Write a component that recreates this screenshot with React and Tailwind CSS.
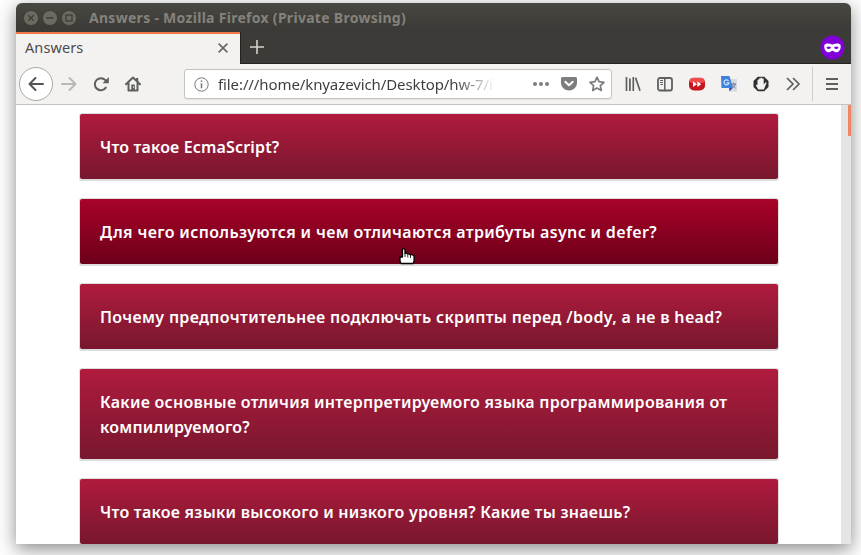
import React from "react";

const questions = [
  { lines: [["Что такое EcmaScript?", "tracking-[0.16px]"]], height: "h-[65px]" },
  { lines: [["Для чего используются и чем отличаются атрибуты async и defer?", "tracking-[0.35px]"]], height: "h-[65px]", active: true },
  { lines: [["Почему предпочтительнее подключать скрипты перед /body, а не в head?", "tracking-[0.33px]"]], height: "h-[65px]" },
  {
    lines: [
      ["Какие основные отличия интерпретируемого языка программирования от", "tracking-[0.26px]"],
      ["компилируемого?", "tracking-[0.22px]"],
    ],
    height: "h-[90px]",
  },
  { lines: [["Что такое языки высокого и низкого уровня? Какие ты знаешь?", "tracking-[0.25px]"]], height: "h-[65px]" },
];

function WindowButton({ children }) {
  return (
    <svg width="16" height="16" viewBox="0 0 16 16" fill="none" stroke="#3c3b37" strokeWidth="1.3">
      <circle cx="8" cy="8" r="7.5" fill="#6b6a60" stroke="#33322e" strokeWidth="0.6" />
      {children}
    </svg>
  );
}

function TitleBar() {
  return (
    <div className="flex h-[29px] items-center gap-[3px] pl-[7px]">
      <WindowButton><path d="M5.3 5.3l5.4 5.4M10.7 5.3l-5.4 5.4" /></WindowButton>
      <WindowButton><path d="M4.5 8h7" /></WindowButton>
      <WindowButton><rect x="5" y="5" width="6" height="6" /></WindowButton>
      <div className="ml-[9px] whitespace-nowrap text-[14px] leading-none font-bold tracking-[0.29px] text-[#85827c]">
        Answers - Mozilla Firefox (Private Browsing)
      </div>
    </div>
  );
}

function TabBar() {
  return (
    <div className="flex h-8 items-stretch">
      <div className="flex w-[224px] items-center justify-between border-t-2 border-[#f07746] bg-[#f3f2f0] pr-3 pl-[9px] text-[14.5px] text-[#4c4c4c]">
        <span className="pb-[3px] leading-none tracking-[0.1px]">Answers</span>
        <svg className="mb-0.5" width="10" height="10" viewBox="0 0 10 10" stroke="#666" strokeWidth="1.6">
          <path d="M.6.6l8.8 8.8M9.4.6L.6 9.4" />
        </svg>
      </div>
      <div className="flex flex-1 items-center border-b border-l border-[#242320] pr-[6px] pl-[9px]">
        <svg className="mb-px" width="14" height="14" viewBox="0 0 14 14" stroke="#d6d3cb" strokeWidth="1.6">
          <path d="M7 0v14M0 7h14" />
        </svg>
        <svg className="ml-auto" width="25" height="25" viewBox="0 0 25 25">
          <circle cx="12.5" cy="12.5" r="12" fill="#8000d7" />
          <path fill="#fff" fillRule="evenodd" d="M4.400 10C5 8.200 9 7.900 12.500 9.500c3.500-1.600 7.500-1.300 8.100.5.700 4.200-1.500 7.300-4.300 7.300-2 0-2.600-1.500-3.800-1.500s-1.800 1.500-3.800 1.500c-2.800 0-5-3.100-4.300-7.300zM6.300 12.800c1.500 1.700 3.300 1.700 4.800 0-1.500-1.700-3.300-1.700-4.800 0zm7.600 0c1.500 1.700 3.300 1.700 4.800 0-1.500-1.700-3.300-1.700-4.800 0z" />
        </svg>
      </div>
    </div>
  );
}

function AddressBar() {
  return (
    <div className="ml-[43px] flex h-[30px] w-[428px] shrink-0 items-center rounded-[3px] border border-[#c5c3c0] bg-white pl-[9px] shadow-[0_1px_1px_#e4e3e1]">
      <svg width="15" height="15" viewBox="0 0 15 15" fill="none" stroke="#777">
        <circle cx="7.500" cy="7.500" r="6.700" />
        <path d="M7.500 6.300v4.900M7.500 3.600v1.500" strokeWidth="1.500" />
      </svg>
      <div className="ml-[9px] w-[278px] overflow-hidden bg-linear-to-r from-[#3c3c3c] from-85% to-transparent bg-clip-text text-[15px] leading-6 tracking-[-0.1px] whitespace-nowrap text-transparent">
        file:///home/knyazevich/Desktop/hw-7/i
      </div>
      <svg className="ml-[36px]" width="18" height="6" viewBox="0 0 18 6" fill="#7d7d7d">
        <circle cx="3" cy="3" r="2" /><circle cx="9" cy="3" r="2" /><circle cx="15" cy="3" r="2" />
      </svg>
      <svg className="ml-[11px]" width="16" height="16" viewBox="0 0 16 16">
        <path fill="#7d7d7d" d="M1.500 1h13A1.500 1.500 0 0 1 16 2.500V7A8 7.500 0 0 1 0 7V2.500A1.500 1.500 0 0 1 1.500 1z" />
        <path d="M4.300 5.800L8 9.300l3.700-3.500" fill="none" stroke="#fff" strokeWidth="2" strokeLinecap="round" strokeLinejoin="round" />
      </svg>
      <svg className="ml-[12px]" width="16" height="16" viewBox="0 0 16 16" fill="none" stroke="#7d7d7d" strokeWidth="1.700" strokeLinejoin="round">
        <path d="M8 1.200l2.050 4.500 4.950.6-3.650 3.350.95 4.850L8 12.100l-4.300 2.400.95-4.850L1 6.300l4.950-.6z" />
      </svg>
    </div>
  );
}

function Toolbar() {
  return (
    <div className="flex h-[41px] items-center border-b border-[#c5c3c0] bg-[#f3f2f0] pl-[3px]">
      <div className="flex size-[34px] items-center justify-center rounded-full border border-[#aaa8a5] bg-white">
        <svg width="16" height="16" viewBox="0 0 16 16" fill="none" stroke="#555" strokeWidth="2" strokeLinecap="round" strokeLinejoin="round">
          <path d="M15 8H1.500M7.500 2L1.500 8l6 6" />
        </svg>
      </div>
      <svg className="ml-2" width="16" height="16" viewBox="0 0 16 16" fill="none" stroke="#b9b8b6" strokeWidth="2" strokeLinecap="round" strokeLinejoin="round">
        <path d="M1 8h13.500M8.500 2l6 6-6 6" />
      </svg>
      <svg className="ml-4" width="16" height="16" viewBox="0 0 16 16" fill="none" stroke="#5f5f5f" strokeWidth="2">
        <path d="M12.800 11.600A6 6 0 1 1 12.300 4.200" strokeLinecap="round" />
        <path d="M15.800 1v6.300H9.500z" fill="#5f5f5f" stroke="none" />
      </svg>
      <svg className="ml-4" width="16" height="16" viewBox="0 0 16 16">
        <path d="M1 8.300L8 1.500l7 6.800M3.500 7v7.500h9V7" fill="none" stroke="#5f5f5f" strokeWidth="2" strokeLinecap="round" strokeLinejoin="round" />
        <path d="M6.300 8.500h3.500v6H6.300zM11 2h2.200v4L11 4z" fill="#5f5f5f" />
        <path d="M8 10.500h1v1.200H8z" fill="#f3f2f0" />
      </svg>
      <AddressBar />
      <svg className="ml-[13px]" width="16" height="16" viewBox="0 0 16 16" stroke="#5f5f5f" strokeWidth="1.700">
        <path d="M1.500 1v14M4.900 2.500V15M8.300 1v14M10.600 1.700L15 14.700" />
      </svg>
      <svg className="ml-4" width="16" height="16" viewBox="0 0 16 16" fill="none" stroke="#5f5f5f">
        <rect x="1" y="2" width="14" height="12.500" rx="2" strokeWidth="1.800" />
        <path d="M7.800 2v12.500" strokeWidth="1.500" />
        <path d="M3 4.500h3M3 6.500h3M3.500 8.500H6" />
      </svg>
      <svg className="ml-4" width="16" height="16" viewBox="0 0 16 16">
        <rect y="1.800" width="16" height="12.700" rx="5" fill="#c4161c" />
        <rect x=".7" y="2" width="14.600" height="5" rx="2.500" fill="#ee4b4b" />
        <path d="M4 5.500l4 2.700-4 2.700zM8.300 5.500l4 2.700-4 2.700z" fill="#fff" />
      </svg>
      <svg className="ml-4" width="16" height="16" viewBox="0 0 16 16">
        <path d="M6 3h10v12.500H9z" fill="#d6d9df" />
        <path d="M0 0h8.500l3.500 12H.5z" fill="#3d82dc" />
        <path d="M8 12h3.500L8.500 15.500z" fill="#3949ab" />
        <path d="M7.500 4.800a2.500 2.500 0 1 0 .5 2H5.500" fill="none" stroke="#cfe3fb" strokeWidth="1.200" />
        <path d="M10.500 8h4.500M12.700 6.800V8M14.300 8c-.5 2-1.800 3-3 3.800M11.500 9c.8 1.500 2 2.300 3 3" fill="none" stroke="#657b94" />
      </svg>
      <svg className="ml-4" width="16" height="16" viewBox="0 0 16 16">
        <path d="M4.800.7h6.400L15.500 5v6l-4.300 4.300H4.800L.5 11V5z" fill="#303030" />
        <path d="M5.300 13.500L2.900 9.500l1-1 .6.500V3.800h1.300V2.600h1.700V1.800H9v.8h1.700V8.500l1.900-2.300 1 .5-2.700 6.800z" fill="#f3f2f0" />
      </svg>
      <svg className="ml-4" width="16" height="16" viewBox="0 0 16 16" fill="none" stroke="#5f5f5f" strokeWidth="1.700">
        <path d="M2 2L8 8l-6 6M8 2l6 6-6 6" />
      </svg>
      <div className="ml-[11px] h-[34px] w-px bg-[#d0cecb]" />
      <svg className="ml-[13px]" width="12" height="12" viewBox="0 0 12 12" stroke="#5f5f5f" strokeWidth="2">
        <path d="M0 1h12M0 6h12M0 11h12" />
      </svg>
    </div>
  );
}

function Question({ lines, height, active }) {
  const fill = active ? "from-[#a90329] to-[#6d0019]" : "from-[#b01a3d] to-[#78172e]";
  return (
    <div className={`${height} ${fill} rounded-[2px] bg-linear-to-b px-5 pt-[21px] shadow-[0_0_0_1px_#ddd,0_1px_0_1px_#ddd]`}>
      {lines.map(([text, tracking]) => (
        <div key={text} className={`${tracking} text-[16px] leading-[25px] font-semibold whitespace-nowrap text-white`}>
          <span>{text}</span>
        </div>
      ))}
    </div>
  );
}

function HandCursor() {
  return (
    <svg className="absolute top-[248px] left-[399px]" width="17" height="17" viewBox="0 0 17 17">
      <path d="M3.500 9V2q0-1.300 1.200-1.300T6 2v3.500q2-.8 2.600.6 1.800-.7 2.500.6 2.800-.4 4 1.400V13l-1 2.500H2L1 13V9z" fill="#fff" stroke="#000" strokeWidth="1.300" strokeLinejoin="round" />
      <path d="M6 5.500v3.500M8.800 6.500v3M11.500 7v3" stroke="#000" strokeWidth=".8" />
    </svg>
  );
}

export default function App() {
  return (
    <div className="relative h-[555px] w-[861px] overflow-hidden bg-[#fdfdfd] pt-[3px] pl-4 font-['Noto_Sans','Open_Sans',sans-serif]">
      <div className="h-[541px] w-[835px] overflow-hidden rounded-t-[6px] bg-white shadow-[0_5px_18px_rgba(0,0,0,0.45)]">
        <div className="bg-linear-to-b from-[#484741] via-[#3c3b37] via-40% to-[#3c3b37]">
          <TitleBar />
          <TabBar />
        </div>
        <Toolbar />
        <div className="flex h-[439px]">
          <main className="flex w-[825px] flex-col gap-5 pt-[9px] pr-[63px] pl-16">
            {questions.map((q) => (
              <Question key={q.lines[0][0]} {...q} />
            ))}
          </main>
          <div className="flex w-[10px] justify-end bg-[#e4e4e4]">
            <div className="h-[31px] w-[3px] rounded-l-[1px] bg-[#f08763]" />
          </div>
        </div>
      </div>
      <HandCursor />
    </div>
  );
}
